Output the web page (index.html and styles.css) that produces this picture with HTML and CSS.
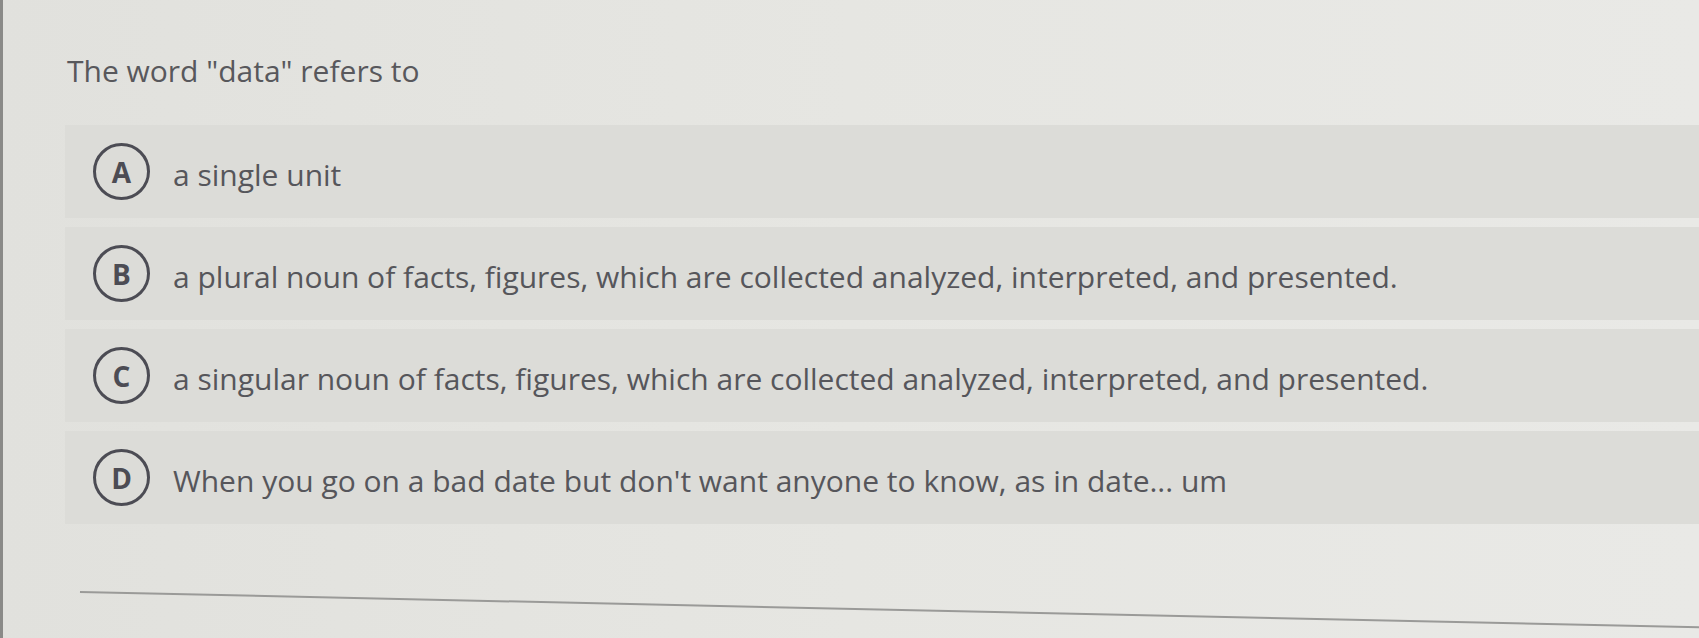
FILE: index.html
```html
<!DOCTYPE html>
<html lang="en">
<head>
<meta charset="utf-8">
<title>Question</title>
<link rel="stylesheet" href="styles.css">
</head>
<body>
<div class="page">
  <h1 class="question">The word "data" refers to</h1>
  <ul class="options">
    <li class="option"><span class="badge">A</span><span class="label">a single unit</span></li>
    <li class="option"><span class="badge">B</span><span class="label">a plural noun of facts, figures, which are collected analyzed, interpreted, and presented.</span></li>
    <li class="option"><span class="badge">C</span><span class="label">a singular noun of facts, figures, which are collected analyzed, interpreted, and presented.</span></li>
    <li class="option"><span class="badge">D</span><span class="label">When you go on a bad date but don't want anyone to know, as in date... um</span></li>
  </ul>
  <div class="divider"></div>
</div>
</body>
</html>
```

FILE: styles.css
```css
html, body {
  margin: 0;
  padding: 0;
  height: 100%;
}
body {
  background: linear-gradient(90deg, #e1e1dd 0%, #e6e6e2 50%, #e9e9e6 100%);
  font-family: "Open Sans", "Noto Sans", sans-serif;
  color: #5a5a5e;
  overflow: hidden;
}
.page {
  border-left: 3px solid #8a8a88;
  height: 100%;
  box-sizing: border-box;
  padding-top: 53px;
}
.question {
  margin: 0 0 36px 64px;
  font-size: 30px;
  line-height: 36px;
  font-weight: 400;
  color: #58585c;
}
.options {
  list-style: none;
  margin: 0 0 0 62px;
  padding: 0;
  display: flex;
  flex-direction: column;
  gap: 9px;
}
.option {
  display: flex;
  align-items: center;
  gap: 23px;
  height: 93px;
  padding-left: 28px;
  background: #dcdcd8;
}
.badge {
  flex: none;
  width: 51px;
  height: 51px;
  border: 3.5px solid #4c4c54;
  border-radius: 50%;
  display: flex;
  align-items: center;
  justify-content: center;
  font-size: 28px;
  font-weight: 700;
  color: #4c4c54;
}
.label {
  font-size: 30px;
  line-height: 41px;
  padding-top: 5px;
  color: #56565b;
  white-space: nowrap;
}
.divider {
  margin: 67px 0 0 77px;
  width: 1700px;
  border-top: 2px solid #9a9a98;
  transform: rotate(1.25deg);
  transform-origin: 0 0;
}
```
